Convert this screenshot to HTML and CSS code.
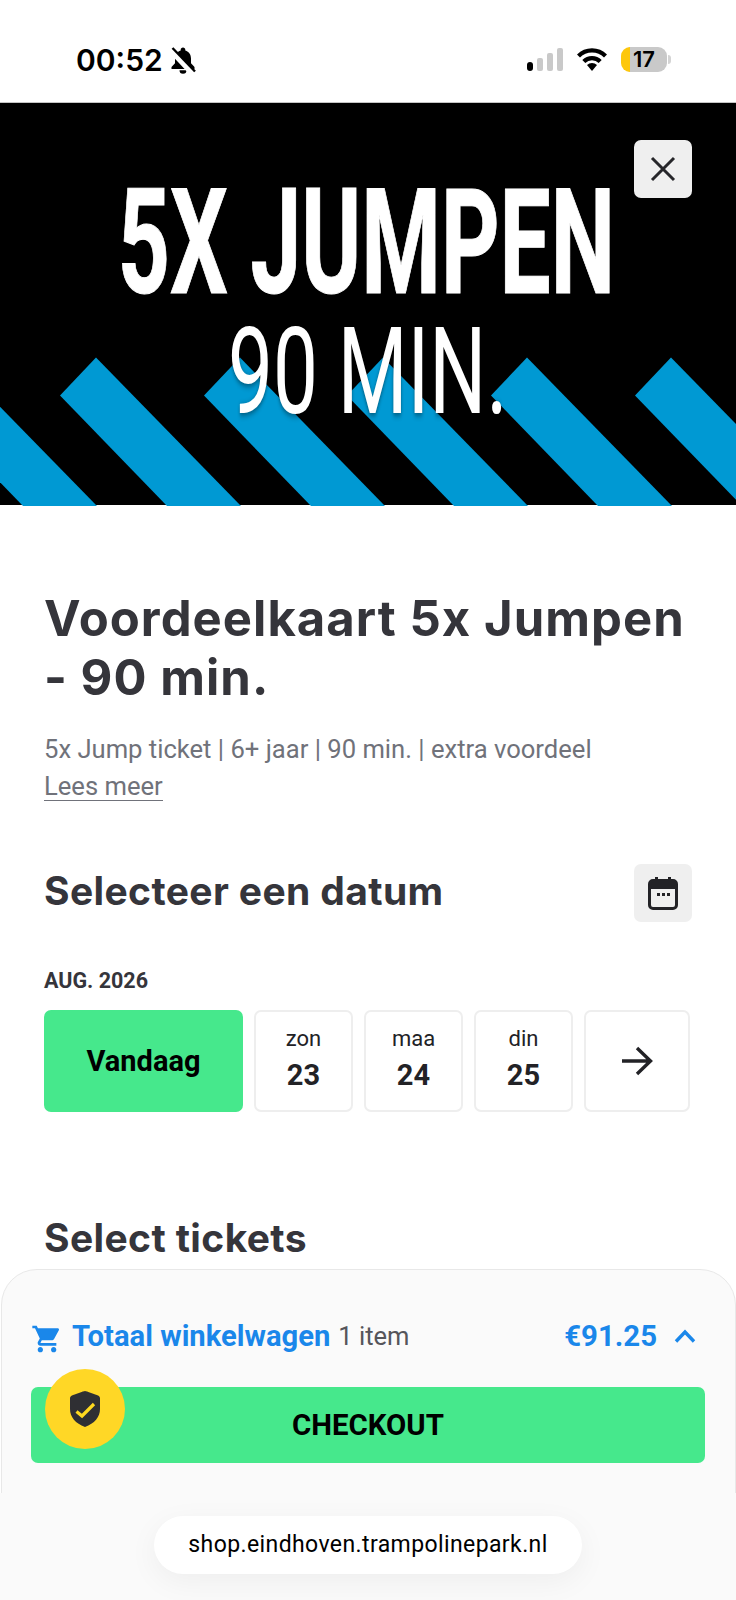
FILE: index.html
```html
<!DOCTYPE html>
<html lang="nl">
<head>
  <meta charset="UTF-8">
  <title>Voordeelkaart 5x Jumpen - 90 min.</title>
  <link rel="stylesheet" href="styles.css">
</head>
<body>
<div class="page">

  <div class="status-bar">
    <div class="status-left">
      <span class="clock">00:52</span>
      <svg class="bell" viewBox="0 0 26 27" width="26" height="27">
        <path d="M13 .5c-1.400 0-2.300 1-2.300 2.200v.7C7 4.400 5 7.600 5 11.500v4.800L1.500 20v2h23v-2L21 16.300v-4.800c0-3.900-2-7.100-5.700-8.100v-.7C15.300 1.500 14.400.5 13 .5z" fill="#000"/>
        <path d="M9.500 23.300a3.500 3.500 0 0 0 7 0z" fill="#000"/>
        <path d="M1 3.500 23 27" stroke="#fff" stroke-width="5.500"/>
        <path d="M2.500 1 25 24.500" stroke="#000" stroke-width="2.400"/>
      </svg>
    </div>
    <div class="status-right">
      <div class="signal">
        <i class="bar bar-1"></i><i class="bar bar-2"></i><i class="bar bar-3"></i><i class="bar bar-4"></i>
      </div>
      <svg class="wifi" viewBox="0 0 30 24" width="30" height="24">
        <path d="M1.500 9a19 19 0 0 1 27 0" fill="none" stroke="#000" stroke-width="4.200"/>
        <path d="M6.800 14.500a11.500 11.500 0 0 1 16.400 0" fill="none" stroke="#000" stroke-width="4.200"/>
        <path d="M10 18a7.500 7.500 0 0 1 10 0l-5 6z" fill="#000"/>
      </svg>
      <div class="battery"><span class="battery-level">17</span></div>
      <i class="battery-tip"></i>
    </div>
  </div>

  <div class="hero">
    <svg class="hero-art" viewBox="0 0 736 403" width="736" height="403">
      <g fill="#0099d3">
        <path d="M-48 254.500 L97 403 L23 403 L-84 292.500z"/>
        <path d="M96 254.500 L241 403 L167 403 L60 292.500z"/>
        <path d="M240 254.500 L385 403 L311 403 L204 292.500z"/>
        <path d="M383 254.500 L528 403 L454 403 L347 292.500z"/>
        <path d="M527 254.500 L672 403 L598 403 L491 292.500z"/>
        <path d="M671 254.500 L816 403 L742 403 L635 292.500z"/>
      </g>
      <text class="hero-line-1" transform="scale(.62 1)" x="190" y="190" textLength="802" lengthAdjust="spacingAndGlyphs">5X JUMPEN</text>
      <text class="hero-line-2" transform="scale(.58 1)" x="393" y="310" textLength="482" lengthAdjust="spacingAndGlyphs">90 MIN.</text>
    </svg>
    <button class="square-btn close-btn">
      <svg viewBox="0 0 26 26" width="26" height="26">
        <path d="M2 2 24 24M24 2 2 24" stroke="#26262a" stroke-width="3" fill="none"/>
      </svg>
    </button>
  </div>

  <div class="content">
    <h1>Voordeelkaart 5x Jumpen<br>- 90 min.</h1>
    <p class="intro">5x Jump ticket | 6+ jaar | 90 min. | extra voordeel</p>
    <a class="more">Lees meer</a>

    <div class="date-head">
      <h2>Selecteer een datum</h2>
      <button class="square-btn">
        <svg viewBox="0 0 30 34" width="30" height="34">
          <path d="M7 1h3v4H7zM20 1h3v4h-3z" fill="#222226"/>
          <rect x="1.500" y="4.500" width="27" height="28" rx="3.500" fill="none" stroke="#222226" stroke-width="3"/>
          <path d="M2 5h26v8H2z" fill="#222226"/>
          <path d="M9 17h3v3H9zM14 17h3v3h-3zM19 17h3v3h-3z" fill="#222226"/>
        </svg>
      </button>
    </div>

    <div class="month">AUG. 2026</div>
    <div class="dates">
      <div class="date today">Vandaag</div>
      <div class="date"><span class="day">zon</span><b>23</b></div>
      <div class="date"><span class="day">maa</span><b>24</b></div>
      <div class="date"><span class="day">din</span><b>25</b></div>
      <div class="date next">
        <svg viewBox="0 0 32 30" width="32" height="30">
          <path d="M1 15h28M16 2l13.500 13L16 28" fill="none" stroke="#222226" stroke-width="3.400"/>
        </svg>
      </div>
    </div>

    <h2 class="tickets-title">Select tickets</h2>
  </div>

  <div class="cart">
    <div class="cart-row">
      <svg class="cart-icon" viewBox="0 0 24 24" width="32" height="32">
        <path d="M7 18c-1.100 0-1.990.9-1.990 2S5.900 22 7 22s2-.9 2-2-.9-2-2-2zM1 2v2h2l3.600 7.590-1.350 2.450c-.16.28-.25.61-.25.96 0 1.100.9 2 2 2h12v-2H7.420c-.14 0-.25-.11-.25-.25l.03-.12.9-1.630h7.450c.75 0 1.410-.41 1.750-1.030l3.580-6.470c.08-.14.12-.31.12-.48 0-.55-.45-1-1-1H5.210l-.94-2H1zm16 16c-1.100 0-1.990.9-1.990 2s.89 2 1.990 2 2-.9 2-2-.9-2-2-2z" fill="#1a87ea"/>
      </svg>
      <span class="cart-title">Totaal winkelwagen</span>
      <span class="cart-count">1 item</span>
      <span class="cart-price">€91.25</span>
      <svg class="chevron" viewBox="0 0 22 14" width="22" height="14">
        <path d="M2 12.500 11 3l9 9.500" fill="none" stroke="#1a87ea" stroke-width="3.400"/>
      </svg>
    </div>
    <button class="checkout">CHECKOUT</button>
    <div class="shield-badge">
      <svg viewBox="0 0 30 36" width="30" height="36">
        <path d="M15 0c1 0 11 3.500 13 4.500 1.300.6 2 1.500 2 3V18c0 8-5.500 14.500-15 18C5.500 32.500 0 26 0 18V7.500c0-1.500.7-2.400 2-3C4 3.500 14 0 15 0z" fill="#2f2f33"/>
        <path d="M6.500 20.500l5.500 4.500L24 13" fill="none" stroke="#ffd91f" stroke-width="3.200"/>
      </svg>
    </div>
  </div>

  <div class="browser-bar">
    <div class="url">shop.eindhoven.trampolinepark.nl</div>
  </div>

</div>
</body>
</html>
```

FILE: styles.css
```css
* {
  box-sizing: border-box;
}
body {
  margin: 0;
  font-family: Roboto, Arial, sans-serif;
  background: #fff;
}
.page {
  position: relative;
  width: 736px;
  height: 1600px;
  overflow: hidden;
  background: #fff;
}

/* status bar */
.status-bar {
  height: 103px;
  display: flex;
  justify-content: space-between;
  align-items: flex-start;
  padding: 46px 65px 0 76px;
  border-bottom: 1px solid #c4c4c4;
}
.status-left {
  display: flex;
  align-items: center;
  gap: 7px;
}
.clock {
  font-family: Inter, sans-serif;
  font-size: 30px;
  font-weight: 600;
  line-height: 28px;
  color: #000;
}
.status-right {
  display: flex;
  align-items: center;
  height: 26px;
}
.signal {
  display: flex;
  align-items: flex-end;
  gap: 3.500px;
  height: 23px;
  margin-right: 14px;
}
.bar {
  display: block;
  width: 6.500px;
  border-radius: 2px;
  background: #c9c9c9;
}
.bar-1 {
  height: 9px;
  border-radius: 3px;
  background: #000;
}
.bar-2 {
  height: 13px;
}
.bar-3 {
  height: 18px;
}
.bar-4 {
  height: 23px;
}
.battery {
  width: 46px;
  height: 25px;
  margin-left: 14px;
  border-radius: 9px;
  border-left: 9px solid #fdc70c;
  background: #c9c9c9;
}
.battery-level {
  display: block;
  padding-left: 3px;
  font-family: Inter, sans-serif;
  font-size: 22px;
  font-weight: 600;
  line-height: 25px;
  color: #000;
}
.battery-tip {
  display: block;
  width: 3px;
  height: 9px;
  margin-left: 1px;
  border-radius: 0 3px 3px 0;
  background: #d4d4d4;
}

/* hero */
.hero {
  position: relative;
  height: 402px;
  background: #000;
}
.hero-art {
  display: block;
}
.hero-line-1,
.hero-line-2 {
  font-family: Roboto, sans-serif;
  fill: #fff;
}
.hero-line-1 {
  font-size: 147px;
  font-weight: 700;
  stroke: #fff;
  stroke-width: 1px;
}
.hero-line-2 {
  font-size: 121px;
  font-weight: 400;
  filter: drop-shadow(0 2px 3px rgba(0, 0, 0, 0.45));
}
.square-btn {
  display: flex;
  align-items: center;
  justify-content: center;
  width: 58px;
  height: 58px;
  padding: 0;
  border: none;
  border-radius: 7px;
  background: #efefef;
}
.close-btn {
  position: absolute;
  top: 37px;
  right: 44px;
}

/* content */
.content {
  padding: 84px 44px 0 44px;
  color: #35353b;
}
h1 {
  margin: 0;
  font-family: Inter, sans-serif;
  font-size: 49px;
  font-weight: 700;
  line-height: 59px;
  letter-spacing: 1.050px;
  color: #35353b;
}
.intro {
  margin: 24px 0 0;
  font-size: 25.600px;
  line-height: 37px;
  color: #70727a;
}
.more {
  display: block;
  width: fit-content;
  margin-top: 5px;
  font-size: 25.600px;
  line-height: 27px;
  color: #70727a;
  border-bottom: 1px solid #70727a;
}
.date-head {
  display: flex;
  justify-content: space-between;
  align-items: center;
  margin-top: 63px;
}
h2 {
  margin: 0;
  font-family: Inter, sans-serif;
  font-size: 39px;
  font-weight: 700;
  line-height: 46px;
  letter-spacing: 0.380px;
  color: #35353b;
}
.date-head h2 {
  margin-top: -5px;
}
.month {
  margin-top: 45px;
  font-size: 21.500px;
  font-weight: 700;
  line-height: 28px;
  color: #35353b;
}
.dates {
  display: flex;
  gap: 11px;
  margin-top: 15px;
}
.date {
  width: 99px;
  height: 102px;
  display: flex;
  flex-direction: column;
  align-items: center;
  justify-content: center;
  border: 2px solid #eeeeee;
  border-radius: 7px;
  background: #fff;
  color: #222226;
}
.date .day {
  margin-bottom: 4px;
  font-size: 22px;
  line-height: 28px;
}
.date b {
  padding-bottom: 4px;
  font-size: 29px;
  font-weight: 700;
  line-height: 36px;
}
.today {
  width: 199px;
  border: none;
  background: #46e88c;
  font-size: 29px;
  font-weight: 700;
  color: #000;
}
.next {
  width: 106px;
}
.tickets-title {
  margin-top: 103px;
}

/* cart */
.cart {
  position: absolute;
  left: 1px;
  right: 0;
  top: 1269px;
  height: 240px;
  padding: 0 29px;
  border: 1px solid #e8e8e8;
  border-radius: 36px 36px 0 0;
  background: #fafafa;
}
.cart-row {
  display: flex;
  align-items: center;
  height: 30px;
  margin-top: 51px;
}
.cart-icon {
  margin-top: 6px;
}
.cart-title {
  margin-left: 9px;
  font-size: 29.200px;
  font-weight: 700;
  color: #1a87ea;
}
.cart-count {
  margin-left: 8px;
  font-size: 25.500px;
  color: #55555a;
}
.cart-price {
  margin-left: auto;
  font-size: 29.400px;
  font-weight: 700;
  color: #1a87ea;
}
.chevron {
  margin: 0 10px 0 17px;
}
.checkout {
  display: block;
  width: 674px;
  height: 76px;
  margin: 36px 0 0;
  border: none;
  border-radius: 7px;
  background: #46e88c;
  font-family: Roboto, Arial, sans-serif;
  font-size: 29.400px;
  font-weight: 700;
  color: #000;
}
.shield-badge {
  position: absolute;
  left: 43px;
  top: 99px;
  width: 80px;
  height: 80px;
  display: flex;
  align-items: center;
  justify-content: center;
  border-radius: 50%;
  background: #ffd726;
}

/* browser bar */
.browser-bar {
  position: absolute;
  left: 0;
  right: 0;
  bottom: 0;
  height: 107px;
  display: flex;
  justify-content: center;
  padding-top: 23px;
  background: #fafafa;
}
.url {
  width: 428px;
  height: 58px;
  border-radius: 29px;
  background: #fff;
  box-shadow: 0 8px 30px rgba(0, 0, 0, 0.05);
  font-size: 23px;
  line-height: 58px;
  letter-spacing: 0.400px;
  text-align: center;
  color: #000;
}
```
